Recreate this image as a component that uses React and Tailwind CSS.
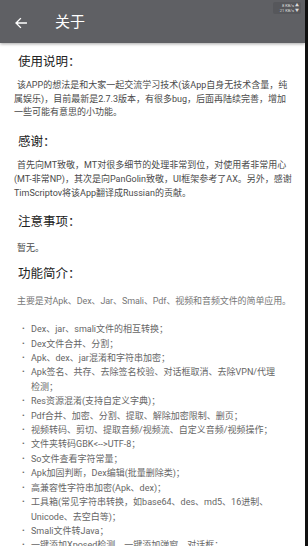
import React from "react";

const features = [
  "Dex、jar、smali文件的相互转换；",
  "Dex文件合并、分割；",
  "Apk、dex、jar混淆和字符串加密；",
  "Apk签名、共存、去除签名校验、对话框取消、去除VPN/代理检测；",
  "Res资源混淆(支持自定义字典)；",
  "Pdf合并、加密、分割、提取、解除加密限制、删页；",
  "视频转码、剪切、提取音频/视频流、自定义音频/视频操作；",
  "文件夹转码GBK<-->UTF-8；",
  "So文件查看字符常量；",
  "Apk加固判断，Dex编辑(批量删除类)；",
  "高兼容性字符串加密(Apk、dex)；",
  "工具箱(常见字符串转换，如base64、des、md5、16进制、Unicode、去空白等)；",
  "Smali文件转Java；",
  "一键添加Xposed检测，一键添加弹窗、对话框；",
];

function Heading({ children, className = "" }) {
  return (
    <h2 className={`h-[20px] leading-[20px] text-[12.5px] text-[#222] pl-[18px] ${className}`}>
      {children}
    </h2>
  );
}

export default function App() {
  return (
    <div
      className="w-[308px] h-[546px] overflow-hidden flex bg-white"
      style={{ fontFamily: 'Roboto, "Noto Sans CJK SC", sans-serif' }}
    >
      <div className="flex-1 flex flex-col min-w-0">
        <div className="h-[43px] bg-[#5f6064] relative shadow-[0_1px_3px_rgba(0,0,0,0.35)] z-10 shrink-0">
          <div className="absolute right-[4px] top-[2px] w-[28px] h-[12px] rounded-[2px] bg-[#56575b] flex flex-col items-end justify-center pr-[2px] text-[4px] leading-[5px] text-[#ddd]">
            <span>8 KB/s ▲</span>
            <span>21 KB/s ▼</span>
          </div>
          <div className="flex items-center h-full pt-[2px]">
            <svg className="ml-[14px]" width="14" height="14" viewBox="0 0 24 24" fill="none" stroke="#fff" strokeWidth="2.4" strokeLinecap="square">
              <path d="M21 12H4M11 4.5L3.5 12 11 19.5" />
            </svg>
            <span className="ml-[27px] text-[15px] text-white leading-none">关于</span>
          </div>
        </div>

        <div className="flex-1">
          <Heading className="mt-[9px]">使用说明：</Heading>
          <p className="mt-[7px] pl-[14px] pr-[12px] text-[9px] leading-[13.7px] text-[#4a4a4a] indent-[3px]">
            该APP的想法是和大家一起交流学习技术(该App自身无技术含量，纯属娱乐)，目前最新是2.7.3版本，有很多bug，后面再陆续完善，增加一些可能有意思的小功能。
          </p>

          <Heading className="mt-[12px]">感谢：</Heading>
          <p className="mt-[7px] pl-[14px] pr-[12px] text-[9px] leading-[13.7px] text-[#4a4a4a] indent-[3px]">
            首先向MT致敬，MT对很多细节的处理非常到位，对使用者非常用心(MT-非常NP)，其次是向PanGolin致敬，UI框架参考了AX。另外，感谢TimScriptov将该App翻译成Russian的贡献。
          </p>

          <Heading className="mt-[12px]">注意事项：</Heading>
          <p className="mt-[9px] pl-[17px] text-[9px] leading-[14px] text-[#4a4a4a]">暂无。</p>

          <Heading className="mt-[9px]">功能简介：</Heading>
          <p className="mt-[10px] pl-[17px] pr-[4px] text-[9px] leading-[14px] text-[#777] whitespace-nowrap tracking-[-0.1px]">
            主要是对Apk、Dex、Jar、Smali、Pdf、视频和音频文件的简单应用。
          </p>

          <ul className="mt-[14px] pr-[26px] text-[9px] leading-[14.4px] text-[#666]">
            {features.map((f) => (
              <li key={f} className="flex">
                <span className="w-[31px] shrink-0 pl-[22px] text-[8px]">•</span>
                <span>{f}</span>
              </li>
            ))}
          </ul>
        </div>
      </div>
      <div className="w-[3px] bg-[#111] shrink-0" />
    </div>
  );
}
